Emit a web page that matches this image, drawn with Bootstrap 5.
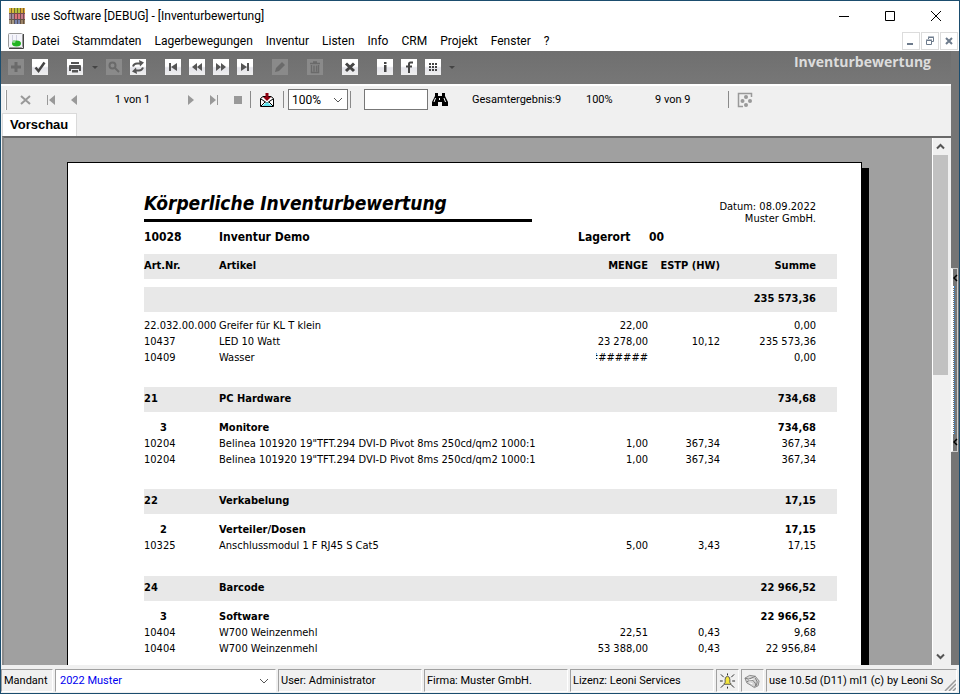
<!DOCTYPE html>
<html lang="de">
<head>
<meta charset="utf-8">
<meta name="viewport" content="width=device-width, initial-scale=1">
<title>use Software [DEBUG] - [Inventurbewertung]</title>
<link rel="stylesheet" href="https://cdn.jsdelivr.net/npm/bootstrap@5.3.0/dist/css/bootstrap.min.css">
<style>
body{font:12px/16px Roboto,"Open Sans",sans-serif;color:#000;background:#fff;border:1px solid #1b4d6e}
svg{display:block}
button{border:0;background:none;padding:0;color:inherit}
.titlebar{height:29px;padding:0 17px 0 8px;gap:6px}
.winbtns{gap:34px}
.menubar{height:21px;padding:0 1px 0 7px}
.menubar a{color:#000;text-decoration:none;margin-right:13px}
.mdi button{width:18px;height:18px;border:1px solid #dcdcdc;margin-left:1px}
.tools{background:linear-gradient(#6f6f6f,#777);height:33px;padding:0 28px 2px 7px;margin-right:-8px}
.tb{width:16px;height:16px;background:linear-gradient(#fff 45%,#e4e4ea 55%,#eee);color:#555;margin-right:8px}
.tb.dim{background:#8a8a8a;color:#6a6a6a}
.drop{width:7px;margin-right:8px}
.gap-after{margin-right:19px}
.view-name{font:bold 14px/18px "Open Sans",sans-serif;color:#dcdcdc;margin-bottom:10px}
.side{width:8px;background:#757575}
.grip{height:184px;margin-top:217px;width:7px;border:1px solid #ccc;border-left:2px solid #fff;padding:5px 0}
.dots{width:2px;border-left:1px dotted #fff;border-right:1px dotted #2d7cc4}
.chrome{background:#f0f0f0}
.preview{height:29px;padding-left:4px;font-size:11px;border-top:2px solid #fff}
.preview input,.preview select{height:21px;border:1px solid #777;background-color:#fff;border-radius:0;outline:0;padding:0 3px;color:#000;font-size:12px}
.preview select,.status select{appearance:none;background:#fff url("data:image/svg+xml,%3Csvg xmlns='http://www.w3.org/2000/svg' width='10' height='6'%3E%3Cpath d='M1 1l4 4 4-4' fill='none' stroke='%23555'/%3E%3C/svg%3E") no-repeat right 4px center}
.zoom-box{width:60px}
.find-box{width:64px}
.rule{width:1px;height:17px;background:#8a8a8a}
.rule.tight{margin:0 13px 0 2px}
.handle{width:2px;height:20px;border-right:1px solid #999;background:#fff;margin-right:12px}
.pages{width:111px}
.total{width:114px}
.pct{width:69px}
.hits{width:73px}
.tab{font:bold 13px/22px "Liberation Sans",sans-serif;background:#fff;border:1px solid #dadada;border-bottom:0;padding:0 8px 0 7px;margin-left:1px}
.canvas-frame{border-top:2px solid #696969;border-left:2px solid #8a8a8a;background:#a0a0a0;margin-left:1px}
.desk{padding:24px 70px 0 63px}
.sheet{width:100%;max-width:795px;background:#fff;border:1px solid #000;box-shadow:7px 6px 0 #000;padding:27px 24px 0 76px;min-height:620px;font:11px/12px "DejaVu Sans Condensed","DejaVu Sans",sans-serif}
.head-title{font:italic bold 19px/26px "DejaVu Sans Condensed","DejaVu Sans",sans-serif;border-bottom:3px solid #000;width:388px;padding-bottom:3px;margin:0}
.head-meta{padding:11px 21px 0 0}
.demo{font:bold 12px/16px "DejaVu Sans Condensed","DejaVu Sans",sans-serif;margin:4px 0 9px}
.demo-no{width:75px}
.demo-name{width:359px}
.demo-loc{width:71px}
.report{width:100%;table-layout:fixed;border-collapse:collapse}
.report td,.report th{padding:0;height:16px;line-height:16px;white-space:nowrap}
.report .num{text-align:right}
.report .sum{text-align:right;padding-right:21px}
.report .band td,.report .band th{background:#e8e8e8;height:25px;padding-bottom:2px}
.report .sp-s td{height:8px;line-height:0}
.report .sp-xs td{height:6px;line-height:0}
.report .sp-m td{height:21px;line-height:0}
.report .sp-l td{height:22px;line-height:0}
.report .grp td:first-child{padding-left:16px}
.hashes{display:inline-block;width:52px;height:16px;overflow:hidden;direction:rtl;vertical-align:top}
.vscroll{width:19px;background:#f0f0f0;border-left:1px solid #fff;padding-right:3px}
.thumb{height:220px;background:#c1c1c1}
.arrow{height:17px}
.status{height:28px;padding:4px 2px 1px 0;font-size:11px;gap:2px}
.cell{border:1px solid #a0a0a0;border-right-color:#fff;border-bottom-color:#fff;padding:0 2px;white-space:nowrap;overflow:hidden}
.status select{border:0;width:100%;color:#0000f0;font-size:11px;border-radius:0;padding:0 2px;outline:0}
.c-label{width:52px}.c-mand{width:221px}.c-user{width:144px}.c-ico{width:23px}
.c-label,.c-mand,.c-user,.c-ico{flex-shrink:0}
.c-ver{min-width:0;padding-right:0}
</style>
<script src="https://cdn.jsdelivr.net/npm/bootstrap@5.3.0/dist/js/bootstrap.bundle.min.js"></script>
</head>
<body class="vh-100 d-flex flex-column overflow-hidden">
<header>
  <div class="titlebar d-flex align-items-center">
    <svg width="16" height="16" viewBox="0 0 16 16"><path fill="#d9b83c" d="M0 0h5v5H0z"/><path fill="#b5c23c" d="M5 0h6v5H5z"/><path fill="#d7a83a" d="M11 0h5v5h-5z"/><path fill="#a08a9c" d="M0 5h5v6H0z"/><path fill="#d9737b" d="M5 5h6v6H5z"/><path fill="#c77a8c" d="M11 5h5v6h-5z"/><path fill="#a89a84" d="M0 11h5v5H0z"/><path fill="#7a86b0" d="M5 11h6v5H5z"/><path fill="#9c8468" d="M11 11h5v5h-5z"/><path stroke="#403028" d="M2.500 0v16M5.500 0v16M8.500 0v16M11.500 0v16M14.500 0v16M0 5.500h16M0 11.500h16" opacity=".6"/></svg>
    <span class="me-auto">use Software [DEBUG] - [Inventurbewertung]</span>
    <div class="winbtns d-flex align-items-center">
      <button aria-label="Minimieren"><svg width="12" height="12"><path d="M1 6.500h10" stroke="#000"/></svg></button>
      <button aria-label="Maximieren"><svg width="12" height="12"><path d="M1.500 1.500h9v9h-9z" fill="none" stroke="#000"/></svg></button>
      <button aria-label="Schließen"><svg width="12" height="12"><path d="M1 1l10 10M11 1L1 11" stroke="#000"/></svg></button>
    </div>
  </div>
  <nav class="menubar d-flex align-items-center" aria-label="Hauptmenü">
    <svg class="me-2" width="16" height="16" viewBox="0 0 16 16"><rect x=".5" y=".5" width="14" height="14" rx="1" fill="#f4f4fa" stroke="#999"/><path d="M15.500 1v14.500H1" fill="none" stroke="#444"/><path d="M4.500 2v7M8.500 2v6" stroke="#d0d0e0"/><ellipse cx="8.500" cy="10.500" rx="4.500" ry="3" fill="#22b422"/><circle cx="6" cy="8.500" r="1.500" fill="#8cdc8c"/></svg>
    <a href="#">Datei</a><a href="#">Stammdaten</a><a href="#">Lagerbewegungen</a><a href="#">Inventur</a><a href="#">Listen</a><a href="#">Info</a><a href="#">CRM</a><a href="#">Projekt</a><a href="#">Fenster</a><a href="#">?</a>
    <div class="mdi d-flex ms-auto">
      <button aria-label="Fenster minimieren"><svg width="16" height="16"><path d="M4 11h6" stroke="#6d7b8c" stroke-width="2"/></svg></button>
      <button aria-label="Fenster wiederherstellen"><svg width="16" height="16"><path d="M4.500 7.500h5v4h-5zM4 7h6M6.500 6V4.500h5v4H10M6 4h6" fill="none" stroke="#6d7b8c"/></svg></button>
      <button aria-label="Fenster schließen"><svg width="16" height="16"><path d="M5 5l6 6M11 5l-6 6" stroke="#6d7b8c" stroke-width="2"/></svg></button>
    </div>
  </nav>
</header>

<div class="d-flex flex-grow-1 overflow-hidden">
  <main class="d-flex flex-column flex-grow-1 chrome">
    <div class="tools d-flex align-items-center flex-shrink-0">
      <button class="tb dim" aria-label="Neu"><svg width="16" height="16"><path d="M8 3v10M3 8h10" stroke="currentColor" stroke-width="3"/></svg></button>
      <button class="tb gap-after" aria-label="Übernehmen"><svg width="16" height="16"><path d="M3.500 8.500l3 3.500 6-8.500" fill="none" stroke="#444" stroke-width="2.500"/></svg></button>
      <button class="tb" aria-label="Drucken"><svg width="16" height="16" fill="#555"><path d="M4 3h8v2H4zM3 6h10q1 0 1 1v5h-2v-2H4v2H2V7q0-1 1-1zM5 11h6v2.500H5z"/></svg></button>
      <button class="drop" aria-label="Druckoptionen"><svg width="7" height="16"><path d="M1 7h6l-3 3z" fill="#444"/></svg></button>
      <button class="tb dim" aria-label="Suchen"><svg width="16" height="16" fill="none" stroke="currentColor" stroke-width="2"><circle cx="6.500" cy="6.500" r="3"/><path d="M9 9l4 4"/></svg></button>
      <button class="tb gap-after" aria-label="Aktualisieren"><svg width="16" height="16"><path d="M3 7.500Q4 4.500 7 4.500h3M13 8.500q-1 3-4 3H6" fill="none" stroke="#555" stroke-width="2"/><path d="M9 1l5 2.500-4 4zM7 15l-5-2.500 4-4z" fill="#555"/></svg></button>
      <button class="tb" aria-label="Erster"><svg width="16" height="16" fill="#555"><path d="M4 4h2v8H4zM12 4v8L6 8z"/></svg></button>
      <button class="tb" aria-label="Zurück"><svg width="16" height="16" fill="#555"><path d="M8 4v8L3 8zM13 4v8L8 8z"/></svg></button>
      <button class="tb" aria-label="Vor"><svg width="16" height="16" fill="#555"><path d="M3 4v8l5-4zM8 4v8l5-4z"/></svg></button>
      <button class="tb gap-after" aria-label="Letzter"><svg width="16" height="16" fill="#555"><path d="M10 4h2v8h-2zM4 4v8l6-4z"/></svg></button>
      <button class="tb dim gap-after" aria-label="Bearbeiten"><svg width="16" height="16" fill="currentColor"><path d="M3 13l1-4 6-6 3 3-6 6z"/></svg></button>
      <button class="tb dim gap-after" aria-label="Löschen"><svg width="16" height="16"><path d="M3 4.500h10M6 3h4M4.500 6v7.500h7V6M7 6.500v6M9.500 6.500v6" fill="none" stroke="currentColor" stroke-width="1.500"/></svg></button>
      <button class="tb gap-after" aria-label="Abbrechen"><svg width="16" height="16"><path d="M4 4.500l8 7.500M12 4.500L4 12" stroke="#444" stroke-width="3"/></svg></button>
      <button class="tb" aria-label="Info"><svg width="16" height="16" fill="#444"><path d="M7 3h2.500v2H7zM7 6h2.500v7H7z"/></svg></button>
      <button class="tb" aria-label="Favoriten"><svg width="16" height="16"><path d="M12 3.500H9.500Q8 3.500 8 5v9M5 7.500h6" fill="none" stroke="#444" stroke-width="2"/></svg></button>
      <button class="tb" aria-label="Module"><svg width="16" height="16"><path d="M4 4h2v2H4zM7 4h2v2H7zM10 4h2v2h-2zM4 7h2v2H4zM7 7h2v2H7zM10 7h2v2h-2zM4 10h2v2H4zM7 10h2v2H7zM10 10h2v2h-2z" fill="#444"/></svg></button>
      <button class="drop" aria-label="Weitere Module"><svg width="7" height="16"><path d="M0 7h6l-3 3z" fill="#444"/></svg></button>
      <span class="view-name ms-auto">Inventurbewertung</span>
    </div>

    <div class="preview d-flex align-items-center flex-shrink-0">
      <span class="handle"></span>
      <div class="d-flex align-items-center gap-3">
        <button aria-label="Schließen"><svg width="12" height="12"><path d="M2 2l9 8M11 2l-9 8" stroke="#999" stroke-width="2"/></svg></button>
        <button aria-label="Erste Seite"><svg width="8" height="12" fill="#999"><path d="M0 1h1v10H0zM8 1v10L2 6z"/></svg></button>
        <button aria-label="Vorige Seite"><svg width="6" height="12" fill="#999"><path d="M6 1v10L0 6z"/></svg></button>
      </div>
      <span class="pages text-center">1 von 1</span>
      <div class="d-flex align-items-center gap-3">
        <button aria-label="Nächste Seite"><svg width="6" height="12" fill="#999"><path d="M0 1v10l6-5z"/></svg></button>
        <button aria-label="Letzte Seite"><svg width="8" height="12" fill="#999"><path d="M7 1h1v10H7zM0 1v10l6-5z"/></svg></button>
        <button aria-label="Stopp"><svg width="8" height="12" fill="#999"><path d="M0 2h8v8H0z"/></svg></button>
      </div>
      <span class="rule mx-2"></span>
      <button aria-label="Exportieren"><svg width="16" height="16" viewBox="0 0 16 16"><path d="M1.500 14.500v-8L4 4.500h8l2.500 2v8z" fill="#fff" stroke="#000"/><path d="M2 7l6 4 6-4M2 14l4-4M14 14l-4-4" fill="none" stroke="#000"/><path d="M3 14l5-4 5 4z" fill="#5fe3ee"/><path d="M6.500 1h3v4H12L8 9 4 5h2.500z" fill="#900010"/></svg></button>
      <span class="rule ms-2 me-1"></span>
      <select class="zoom-box" aria-label="Zoom"><option>100%</option></select>
      <span class="rule tight"></span>
      <input class="find-box" type="text" aria-label="Suchtext">
      <button class="ms-1" aria-label="Text suchen"><svg width="16" height="14" viewBox="0 0 16 14"><path d="M3 0h3v3h4V0h3v3l3 6v4h-6V9H6v4H0V9l3-6z" fill="#000"/><path d="M3.500 5L2 9M12 5l1.500 4M7.500 5v2" stroke="#fff"/></svg></button>
      <span class="total ms-4">Gesamtergebnis:9</span>
      <span class="pct">100%</span>
      <span class="hits">9 von 9</span>
      <span class="rule"></span>
      <button class="ms-2" aria-label="Parameter"><svg width="16" height="16" viewBox="0 0 16 16"><path d="M6 14.500H1.500v-13h13V5" fill="none" stroke="#999" stroke-width="1.500"/><g fill="#999"><circle cx="9" cy="5" r="2"/><circle cx="5.500" cy="9" r="2"/><circle cx="13" cy="9" r="2"/><circle cx="9" cy="13" r="2"/></g></svg></button>
    </div>
    <div class="d-flex flex-shrink-0"><button class="tab">Vorschau</button></div>

    <div class="canvas-frame d-flex flex-grow-1 overflow-hidden">
      <div class="desk flex-grow-1 overflow-hidden">
        <article class="sheet mx-auto">
          <div class="d-flex justify-content-between align-items-start">
            <h1 class="head-title text-nowrap">Körperliche Inventurbewertung</h1>
            <div class="head-meta text-end">Datum: 08.09.2022<br>Muster GmbH.</div>
          </div>
          <div class="demo d-flex">
            <span class="demo-no">10028</span><span class="demo-name">Inventur Demo</span><span class="demo-loc">Lagerort</span><span>00</span>
          </div>
          <table class="report">
            <colgroup><col style="width:75px"><col><col style="width:89px"><col style="width:72px"><col style="width:117px"></colgroup>
            <thead><tr class="band"><th>Art.Nr.</th><th>Artikel</th><th class="num">MENGE</th><th class="num">ESTP (HW)</th><th class="sum">Summe</th></tr></thead>
            <tbody>
            <tr class="sp-s"><td colspan="5"></td></tr>
            <tr class="band fw-bold"><td></td><td></td><td></td><td></td><td class="sum">235 573,36</td></tr>
            <tr class="sp-xs"><td colspan="5"></td></tr>
            <tr><td>22.032.00.000</td><td>Greifer für KL T klein</td><td class="num">22,00</td><td></td><td class="sum">0,00</td></tr>
            <tr><td>10437</td><td>LED 10 Watt</td><td class="num">23 278,00</td><td class="num">10,12</td><td class="sum">235 573,36</td></tr>
            <tr><td>10409</td><td>Wasser</td><td class="num"><span class="hashes">#######</span></td><td></td><td class="sum">0,00</td></tr>
            <tr class="sp-m"><td colspan="5"></td></tr>
            <tr class="band fw-bold"><td>21</td><td>PC Hardware</td><td></td><td></td><td class="sum">734,68</td></tr>
            <tr class="sp-s"><td colspan="5"></td></tr>
            <tr class="grp fw-bold"><td>3</td><td>Monitore</td><td></td><td></td><td class="sum">734,68</td></tr>
            <tr><td>10204</td><td>Belinea 101920 19"TFT.294 DVI-D Pivot 8ms 250cd/qm2 1000:1</td><td class="num">1,00</td><td class="num">367,34</td><td class="sum">367,34</td></tr>
            <tr><td>10204</td><td>Belinea 101920 19"TFT.294 DVI-D Pivot 8ms 250cd/qm2 1000:1</td><td class="num">1,00</td><td class="num">367,34</td><td class="sum">367,34</td></tr>
            <tr class="sp-m"><td colspan="5"></td></tr>
            <tr class="band fw-bold"><td>22</td><td>Verkabelung</td><td></td><td></td><td class="sum">17,15</td></tr>
            <tr class="sp-s"><td colspan="5"></td></tr>
            <tr class="grp fw-bold"><td>2</td><td>Verteiler/Dosen</td><td></td><td></td><td class="sum">17,15</td></tr>
            <tr><td>10325</td><td>Anschlussmodul 1 F RJ45 S Cat5</td><td class="num">5,00</td><td class="num">3,43</td><td class="sum">17,15</td></tr>
            <tr class="sp-l"><td colspan="5"></td></tr>
            <tr class="band fw-bold"><td>24</td><td>Barcode</td><td></td><td></td><td class="sum">22 966,52</td></tr>
            <tr class="sp-s"><td colspan="5"></td></tr>
            <tr class="grp fw-bold"><td>3</td><td>Software</td><td></td><td></td><td class="sum">22 966,52</td></tr>
            <tr><td>10404</td><td>W700 Weinzenmehl</td><td class="num">22,51</td><td class="num">0,43</td><td class="sum">9,68</td></tr>
            <tr><td>10404</td><td>W700 Weinzenmehl</td><td class="num">53 388,00</td><td class="num">0,43</td><td class="sum">22 956,84</td></tr>
            </tbody>
          </table>
        </article>
      </div>
      <div class="vscroll d-flex flex-column flex-shrink-0">
        <div class="arrow d-flex align-items-center justify-content-center"><svg width="9" height="7"><path d="M1 5.500l3.500-3.500L8 5.500" fill="none" stroke="#555" stroke-width="2"/></svg></div>
        <div class="thumb"></div>
        <div class="arrow mt-auto d-flex align-items-center justify-content-center"><svg width="9" height="7"><path d="M1 1.500L4.500 5 8 1.500" fill="none" stroke="#555" stroke-width="2"/></svg></div>
      </div>
    </div>
  </main>
  <aside class="side flex-shrink-0">
    <div class="grip d-flex flex-column">
      <svg width="5" height="8"><path d="M4 1L1 4l3 3" fill="none" stroke="#000" stroke-width="1.500"/></svg>
      <div class="dots flex-grow-1 my-1"></div>
      <svg width="5" height="8"><path d="M4 1L1 4l3 3" fill="none" stroke="#000" stroke-width="1.500"/></svg>
    </div>
  </aside>
</div>

<footer class="status chrome d-flex flex-shrink-0">
  <label class="cell c-label d-flex align-items-center" for="mandant">Mandant</label>
  <div class="cell c-mand d-flex bg-white"><select id="mandant"><option>2022 Muster</option></select></div>
  <div class="cell c-user d-flex align-items-center">User: Administrator</div>
  <div class="cell c-user d-flex align-items-center">Firma: Muster GmbH.</div>
  <div class="cell c-user d-flex align-items-center">Lizenz: Leoni Services</div>
  <div class="cell c-ico d-flex align-items-center"><svg width="18" height="16" viewBox="0 0 18 16"><path d="M2 1l3 3M16 1l-3 3M1 8h3M14 8h3M2 15l3-3M16 15l-3-3M9 0v2M9 14v2" stroke="#222"/><path d="M5 11.500l1.500-2V6Q7 3 9 3t2.500 3v3.500l1.500 2z" fill="#f4e63c" stroke="#555"/></svg></div>
  <div class="cell c-ico d-flex align-items-center"><svg width="18" height="16" viewBox="0 0 18 16"><path d="M1 5l5-3 6 1 4 5-1 5-4 2-3-2-5-3z" fill="#d4d4d4" stroke="#888"/><path d="M1 5l4 1 5-2 2-1M3 9q5-4 8 0t0 5M12 5l2 4-1 4" fill="none" stroke="#777"/><path d="M5 7l5-1M6 10l3 1" stroke="#fff"/></svg></div>
  <div class="cell c-ver flex-fill d-flex align-items-center"><span class="overflow-hidden flex-fill">use 10.5d (D11) ml1 (c) by Leoni So</span><svg class="align-self-end flex-shrink-0" width="12" height="12"><path d="M1 12L12 1M5 12l7-7M9 12l3-3" stroke="#999" stroke-width="1.500"/></svg></div>
</footer>
</body>
</html>
